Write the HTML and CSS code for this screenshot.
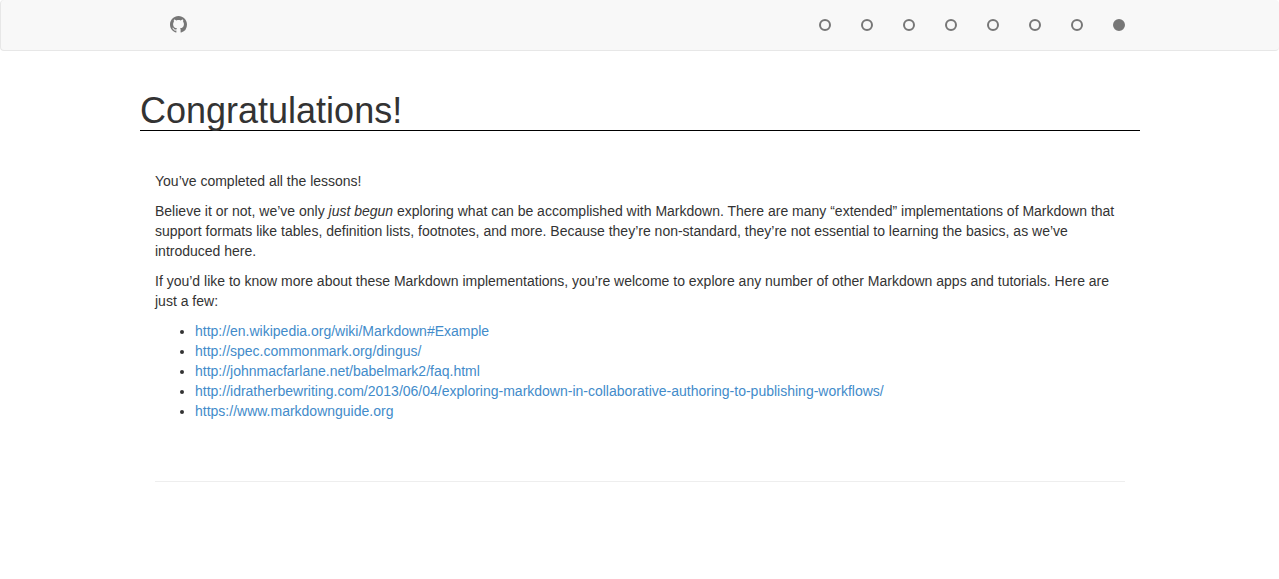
FILE: index.html
```html
<!DOCTYPE html>
<html lang="en">
<head>
<meta charset="utf-8">
<title>Congratulations!</title>
<link rel="stylesheet" href="styles.css">
</head>
<body>
<nav class="navbar" aria-label="Lessons">
  <div class="navbar-inner">
    <a class="brand" href="#" aria-label="GitHub">
      <svg class="icon" viewBox="0 0 16 16" aria-hidden="true"><path d="M8 0C3.58 0 0 3.58 0 8c0 3.54 2.29 6.53 5.47 7.59.4.07.55-.17.55-.38 0-.19-.01-.82-.01-1.49-2.01.37-2.53-.49-2.69-.94-.09-.23-.48-.94-.82-1.13-.28-.15-.68-.52-.01-.53.63-.01 1.08.58 1.23.82.72 1.21 1.87.87 2.33.66.07-.52.28-.87.51-1.07-1.78-.2-3.64-.89-3.64-3.95 0-.87.31-1.59.82-2.15-.08-.2-.36-1.02.08-2.12 0 0 .67-.21 2.2.82.64-.18 1.32-.27 2-.27s1.36.09 2 .27c1.53-1.04 2.2-.82 2.2-.82.44 1.1.16 1.92.08 2.12.51.56.82 1.27.82 2.15 0 3.07-1.87 3.75-3.65 3.95.29.25.54.73.54 1.48 0 1.07-.01 1.93-.01 2.2 0 .21.15.46.55.38A8.01 8.01 0 0 0 16 8c0-4.42-3.58-8-8-8z"/></svg>
    </a>
    <div class="steps">
      <a class="step" href="#" aria-label="Lesson 1"><span class="dot"></span></a>
      <a class="step" href="#" aria-label="Lesson 2"><span class="dot"></span></a>
      <a class="step" href="#" aria-label="Lesson 3"><span class="dot"></span></a>
      <a class="step" href="#" aria-label="Lesson 4"><span class="dot"></span></a>
      <a class="step" href="#" aria-label="Lesson 5"><span class="dot"></span></a>
      <a class="step" href="#" aria-label="Lesson 6"><span class="dot"></span></a>
      <a class="step" href="#" aria-label="Lesson 7"><span class="dot"></span></a>
      <a class="step" href="#" aria-label="Conclusion" aria-current="step"><span class="dot dot-current"></span></a>
    </div>
  </div>
</nav>
<main class="page">
  <h1 class="title">Congratulations!</h1>
  <div class="content">
    <p>You’ve completed all the lessons!</p>
    <p>Believe it or not, we’ve only <em>just begun</em> exploring what can be accomplished with Markdown. There are many “extended” implementations of Markdown that support formats like tables, definition lists, footnotes, and more. Because they’re non-standard, they’re not essential to learning the basics, as we’ve introduced here.</p>
    <p>If you’d like to know more about these Markdown implementations, you’re welcome to explore any number of other Markdown apps and tutorials. Here are just a few:</p>
    <ul class="links">
      <li><a href="#">http://en.wikipedia.org/wiki/Markdown#Example</a></li>
      <li><a href="#">http://spec.commonmark.org/dingus/</a></li>
      <li><a href="#">http://johnmacfarlane.net/babelmark2/faq.html</a></li>
      <li><a href="#">http://idratherbewriting.com/2013/06/04/exploring-markdown-in-collaborative-authoring-to-publishing-workflows/</a></li>
      <li><a href="#">https://www.markdownguide.org</a></li>
    </ul>
    <hr class="divider">
  </div>
</main>
</body>
</html>
```
FILE: styles.css
```css
* {
  box-sizing: border-box;
}

body {
  margin: 0;
  background: #fff;
  color: #333;
  font-family: "Liberation Sans", Arial, sans-serif;
  font-size: 14px;
  line-height: 20px;
}

a {
  color: #428bca;
  text-decoration: none;
}

.navbar {
  border: solid #e7e7e7;
  border-width: 0 0 1px 1px;
  border-radius: 4px;
  background: #f8f8f8;
}

.navbar-inner {
  display: flex;
  align-items: center;
  justify-content: space-between;
  max-width: 1000px;
  min-height: 50px;
  margin: 0 auto;
}

.brand {
  display: flex;
  padding: 15px 30px 16px;
}

.icon {
  width: 17px;
  height: 17px;
  fill: #777;
}

.steps {
  display: flex;
}

.step {
  display: flex;
  padding: 15px;
}

.dot {
  width: 12px;
  height: 12px;
  border: 2px solid #777;
  border-radius: 50%;
}

.dot-current {
  background: #777;
}

.page {
  max-width: 1001px;
  margin: 40px auto 0;
  padding-left: 1px;
}

.title {
  margin: 0;
  border-bottom: 1px solid #000;
  font-size: 36px;
  font-weight: 500;
  line-height: 39px;
}

.content {
  padding: 40px 15px;
}

.content p {
  margin: 0 0 10px;
}

.links {
  margin: 0;
  padding-left: 40px;
}

.divider {
  margin: 60px 0 0;
  border: 0;
  border-top: 1px solid #eee;
}
```
